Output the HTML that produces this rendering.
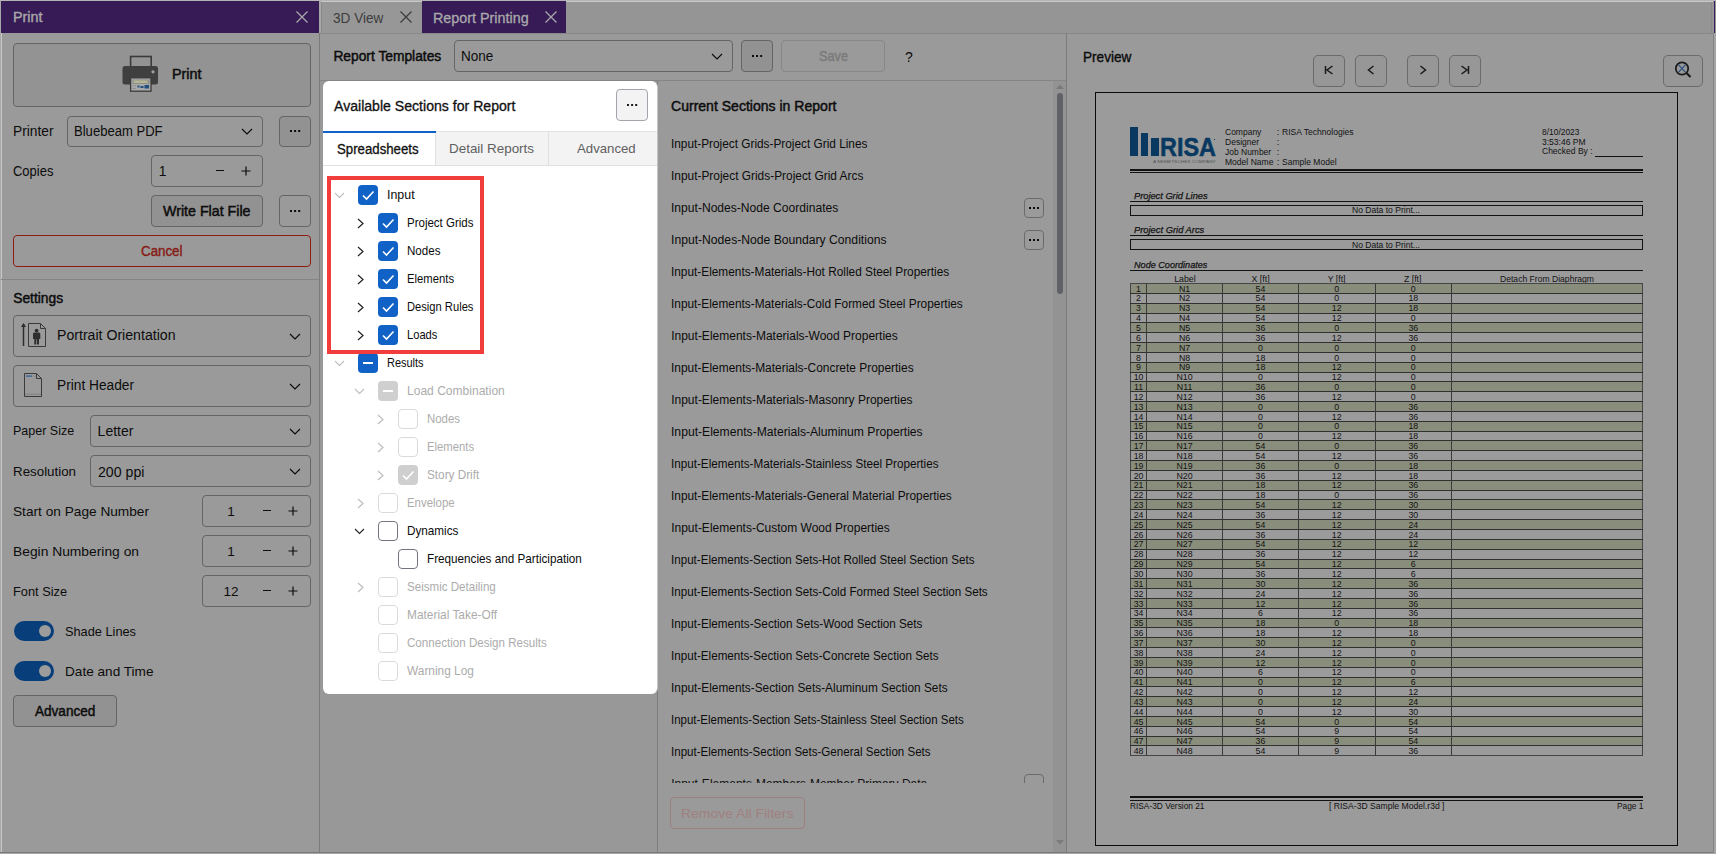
<!DOCTYPE html><html><head><meta charset="utf-8"><style>
html,body{margin:0;padding:0;}
body{width:1716px;height:854px;position:relative;overflow:hidden;font-family:"Liberation Sans",sans-serif;}
.t{position:absolute;white-space:nowrap;line-height:1;transform-origin:0 0;}
.r{position:absolute;}
</style></head><body>
<div class="r" style="left:0px;top:0px;width:1716px;height:854px;background:#9a9a9a"></div>
<div class="r" style="left:0px;top:0px;width:1716px;height:1px;background:#b4b4b4"></div>
<div class="r" style="left:0px;top:0px;width:1px;height:854px;background:#a8a8a8"></div>
<div class="r" style="left:1px;top:0px;width:1px;height:852px;background:#c8c8c8"></div>
<div class="r" style="left:1713px;top:33px;width:1px;height:820px;background:#858585"></div>
<div class="r" style="left:1714px;top:33px;width:2px;height:820px;background:#a4a4a4"></div>
<div class="r" style="left:0px;top:852px;width:1716px;height:1px;background:#787878"></div>
<div class="r" style="left:0px;top:853px;width:1716px;height:1px;background:#a8a8a8"></div>
<div class="r" style="left:1px;top:1px;width:318px;height:32px;background:#361b57"></div>
<div class="t" style="left:12.50px;top:10.45px;font-size:14px;color:#a9a9a9;-webkit-text-stroke:0.35px #a9a9a9;transform:scaleX(1.0248);">Print</div>
<svg class="r" style="left:296px;top:11px" width="12" height="12"><path d="M0.5 0.5 L11.5 11.5 M11.5 0.5 L0.5 11.5" stroke="#a9a9a9" stroke-width="1.3"/></svg>
<div class="r" style="left:319px;top:33px;width:1px;height:820px;background:#7a7a7a"></div>
<div class="r" style="left:13px;top:43px;width:298px;height:64px;background:#939393;border:1px solid #656565;border-radius:4px;box-sizing:border-box;"></div>
<svg class="r" style="left:120px;top:54px" width="42" height="40">
<rect x="10.6" y="2.5" width="20.6" height="11" fill="none" stroke="#3a3a3a" stroke-width="1.6"/>
<rect x="2.5" y="12" width="35.5" height="18.5" rx="2.5" fill="#3f3f3f"/>
<circle cx="33" cy="17.8" r="1.6" fill="#a0a0a0"/>
<rect x="10.6" y="23.8" width="20.4" height="13.4" fill="#a9a9a9" stroke="#3a3a3a" stroke-width="1.3"/>
<rect x="12.5" y="25.5" width="17" height="4.5" fill="#8f8f8a"/>
<rect x="13.6" y="26.4" width="14" height="2.6" fill="#b5b596"/>
<rect x="12" y="31.5" width="4" height="0.8" fill="#8a8a8a"/><rect x="12" y="34" width="4" height="0.8" fill="#8a8a8a"/>
<path d="M17.5 31.5 h2 v2 h-2z M20.5 32 h3 v2 h-3z M24.5 31 h4.5 v3.5 h-4.5z" fill="#1f4f7c"/>
</svg>
<div class="t" style="left:172.40px;top:67.52px;font-size:13.8px;color:#0c0c0c;-webkit-text-stroke:0.45px #0c0c0c;transform:scaleX(1.0396);">Print</div>
<div class="t" style="left:12.50px;top:124.35px;font-size:14px;color:#0c0c0c;transform:scaleX(0.9822);">Printer</div>
<div class="r" style="left:67px;top:116px;width:196px;height:31px;background:#9a9a9a;border:1px solid #656565;border-radius:4px;box-sizing:border-box;"></div>
<div class="t" style="left:74.30px;top:124.45px;font-size:14px;color:#0c0c0c;transform:scaleX(0.9333);">Bluebeam PDF</div>
<svg class="r" style="left:241.0px;top:127.5px" width="12" height="7"><path d="M1 1 L6.0 6 L11 1" fill="none" stroke="#0c0c0c" stroke-width="1.2"/></svg>
<div class="r" style="left:279px;top:116px;width:32px;height:31px;background:#929292;border:1px solid #656565;border-radius:4px;box-sizing:border-box;"></div>
<svg class="r" style="left:287.9px;top:128px" width="14.2" height="6"><rect x="2.0" y="2.0" width="2.0" height="2.0" fill="#0c0c0c"/><rect x="6.1" y="2.0" width="2.0" height="2.0" fill="#0c0c0c"/><rect x="10.2" y="2.0" width="2.0" height="2.0" fill="#0c0c0c"/></svg>
<div class="t" style="left:13.00px;top:163.85px;font-size:14px;color:#0c0c0c;transform:scaleX(0.9270);">Copies</div>
<div class="r" style="left:151px;top:155px;width:112px;height:32px;background:#9a9a9a;border:1px solid #656565;border-radius:4px;box-sizing:border-box;"></div>
<div class="t" style="left:158.80px;top:164.82px;font-size:13.8px;color:#0c0c0c;">1</div>
<div class="r" style="left:216px;top:170px;width:8px;height:1.2px;background:#0c0c0c"></div>
<svg class="r" style="left:241px;top:166px" width="10" height="10"><path d="M0.5 5 H9.5 M5 0.5 V9.5" stroke="#0c0c0c" stroke-width="1.2"/></svg>
<div class="r" style="left:151px;top:195px;width:112px;height:32px;background:#929292;border:1px solid #656565;border-radius:4px;box-sizing:border-box;"></div>
<div class="t" style="left:163.40px;top:204.82px;font-size:13.8px;color:#0c0c0c;-webkit-text-stroke:0.45px #0c0c0c;transform:scaleX(1.0312);">Write Flat File</div>
<div class="r" style="left:279px;top:195px;width:32px;height:32px;background:#9a9a9a;border:1px solid #656565;border-radius:4px;box-sizing:border-box;"></div>
<svg class="r" style="left:287.9px;top:208px" width="14.2" height="6"><rect x="2.0" y="2.0" width="2.0" height="2.0" fill="#0c0c0c"/><rect x="6.1" y="2.0" width="2.0" height="2.0" fill="#0c0c0c"/><rect x="10.2" y="2.0" width="2.0" height="2.0" fill="#0c0c0c"/></svg>
<div class="r" style="left:13px;top:235px;width:298px;height:32px;background:#9a9a9a;border:1px solid #8c1d12;border-radius:4px;box-sizing:border-box;"></div>
<div class="t" style="left:141.15px;top:244.45px;font-size:14px;color:#861a14;-webkit-text-stroke:0.4px #861a14;transform:scaleX(0.9523);">Cancel</div>
<div class="r" style="left:1px;top:279px;width:318px;height:1px;background:#858585"></div>
<div class="t" style="left:13.20px;top:291.52px;font-size:13.8px;color:#0c0c0c;-webkit-text-stroke:0.45px #0c0c0c;">Settings</div>
<div class="r" style="left:13px;top:315px;width:298px;height:42px;background:#9a9a9a;border:1px solid #656565;border-radius:4px;box-sizing:border-box;"></div>
<svg class="r" style="left:20px;top:320px" width="30" height="30">
<path d="M3.5 4 V26" stroke="#2d2d2d" stroke-width="1.5"/><path d="M1 7 L3.5 3 L6 7 Z" fill="#2d2d2d"/>
<path d="M8.5 3.5 H20.5 L25.5 8.5 V26.5 H8.5 Z" fill="none" stroke="#3a3a3a" stroke-width="1"/>
<path d="M20.5 3.5 V8.5 H25.5" fill="none" stroke="#3a3a3a" stroke-width="1"/>
<circle cx="16.6" cy="10.6" r="1.9" fill="#2e2e2e"/>
<path d="M13 14 Q13 12.6 14.5 12.6 H18.8 Q20.3 12.6 20.3 14 V19 H19 V24.5 H17 V19.5 H16.3 V24.5 H14.3 V19 H13 Z" fill="#2e2e2e"/>
</svg>
<div class="t" style="left:56.60px;top:328.05px;font-size:14px;color:#0c0c0c;transform:scaleX(1.0085);">Portrait Orientation</div>
<svg class="r" style="left:289.0px;top:332.5px" width="12" height="7"><path d="M1 1 L6.0 6 L11 1" fill="none" stroke="#0c0c0c" stroke-width="1.2"/></svg>
<div class="r" style="left:13px;top:365px;width:298px;height:42px;background:#9a9a9a;border:1px solid #656565;border-radius:4px;box-sizing:border-box;"></div>
<svg class="r" style="left:22px;top:371px" width="24" height="28">
<path d="M2.5 2.5 H14.5 L19.5 7.5 V25.5 H2.5 Z" fill="none" stroke="#3a3a3a" stroke-width="1"/>
<path d="M14.5 2.5 V7.5 H19.5" fill="none" stroke="#3a3a3a" stroke-width="1"/>
<rect x="4" y="4.5" width="6" height="1.2" fill="#2a5a9a"/><rect x="10.5" y="4.5" width="3.5" height="1.2" fill="#8a8a8a"/>
<rect x="3" y="22.8" width="16" height="0.8" fill="#7a7a7a"/>
</svg>
<div class="t" style="left:56.60px;top:378.15px;font-size:14px;color:#0c0c0c;transform:scaleX(0.9797);">Print Header</div>
<svg class="r" style="left:289.0px;top:382.5px" width="12" height="7"><path d="M1 1 L6.0 6 L11 1" fill="none" stroke="#0c0c0c" stroke-width="1.2"/></svg>
<div class="t" style="left:12.90px;top:424.40px;font-size:13px;color:#0c0c0c;transform:scaleX(0.9608);">Paper Size</div>
<div class="r" style="left:90px;top:415px;width:221px;height:32px;background:#9a9a9a;border:1px solid #656565;border-radius:4px;box-sizing:border-box;"></div>
<div class="t" style="left:97.60px;top:424.45px;font-size:14px;color:#0c0c0c;">Letter</div>
<svg class="r" style="left:289.0px;top:427.5px" width="12" height="7"><path d="M1 1 L6.0 6 L11 1" fill="none" stroke="#0c0c0c" stroke-width="1.2"/></svg>
<div class="t" style="left:12.90px;top:464.60px;font-size:13px;color:#0c0c0c;transform:scaleX(1.0256);">Resolution</div>
<div class="r" style="left:90px;top:455px;width:221px;height:32px;background:#9a9a9a;border:1px solid #656565;border-radius:4px;box-sizing:border-box;"></div>
<div class="t" style="left:97.80px;top:464.55px;font-size:14px;color:#0c0c0c;transform:scaleX(1.0102);">200 ppi</div>
<svg class="r" style="left:289.0px;top:467.5px" width="12" height="7"><path d="M1 1 L6.0 6 L11 1" fill="none" stroke="#0c0c0c" stroke-width="1.2"/></svg>
<div class="t" style="left:12.90px;top:504.77px;font-size:13.5px;color:#0c0c0c;transform:scaleX(1.0125);">Start on Page Number</div>
<div class="r" style="left:202px;top:495px;width:109px;height:32px;background:#9a9a9a;border:1px solid #656565;border-radius:4px;box-sizing:border-box;"></div>
<div class="t" style="left:227.25px;top:504.57px;font-size:13.5px;color:#0c0c0c;">1</div>
<div class="r" style="left:262.5px;top:510px;width:8.5px;height:1.2px;background:#0c0c0c"></div>
<svg class="r" style="left:288px;top:506px" width="10" height="10"><path d="M0.5 5 H9.5 M5 0.5 V9.5" stroke="#0c0c0c" stroke-width="1.2"/></svg>
<div class="t" style="left:12.90px;top:544.77px;font-size:13.5px;color:#0c0c0c;transform:scaleX(1.0238);">Begin Numbering on</div>
<div class="r" style="left:202px;top:535px;width:109px;height:32px;background:#9a9a9a;border:1px solid #656565;border-radius:4px;box-sizing:border-box;"></div>
<div class="t" style="left:227.25px;top:544.57px;font-size:13.5px;color:#0c0c0c;">1</div>
<div class="r" style="left:262.5px;top:550px;width:8.5px;height:1.2px;background:#0c0c0c"></div>
<svg class="r" style="left:288px;top:546px" width="10" height="10"><path d="M0.5 5 H9.5 M5 0.5 V9.5" stroke="#0c0c0c" stroke-width="1.2"/></svg>
<div class="t" style="left:12.90px;top:584.77px;font-size:13.5px;color:#0c0c0c;transform:scaleX(0.9469);">Font Size</div>
<div class="r" style="left:202px;top:575px;width:109px;height:32px;background:#9a9a9a;border:1px solid #656565;border-radius:4px;box-sizing:border-box;"></div>
<div class="t" style="left:223.49px;top:584.57px;font-size:13.5px;color:#0c0c0c;">12</div>
<div class="r" style="left:262.5px;top:590px;width:8.5px;height:1.2px;background:#0c0c0c"></div>
<svg class="r" style="left:288px;top:586px" width="10" height="10"><path d="M0.5 5 H9.5 M5 0.5 V9.5" stroke="#0c0c0c" stroke-width="1.2"/></svg>
<div class="r" style="left:14px;top:621px;width:40px;height:20px;background:#083f7a;border-radius:10px"></div>
<div class="r" style="left:39px;top:625px;width:12px;height:12px;background:#9c9c9c;border-radius:6px"></div>
<div class="t" style="left:65.00px;top:624.77px;font-size:13.5px;color:#0c0c0c;transform:scaleX(0.9459);">Shade Lines</div>
<div class="r" style="left:14px;top:661px;width:40px;height:20px;background:#083f7a;border-radius:10px"></div>
<div class="r" style="left:39px;top:665px;width:12px;height:12px;background:#9c9c9c;border-radius:6px"></div>
<div class="t" style="left:65.00px;top:664.77px;font-size:13.5px;color:#0c0c0c;transform:scaleX(1.0080);">Date and Time</div>
<div class="r" style="left:13px;top:695px;width:104px;height:32px;background:#929292;border:1px solid #656565;border-radius:4px;box-sizing:border-box;"></div>
<div class="t" style="left:35.30px;top:705.12px;font-size:13.8px;color:#0c0c0c;-webkit-text-stroke:0.45px #0c0c0c;transform:scaleX(0.9824);">Advanced</div>
<div class="r" style="left:320px;top:1px;width:1396px;height:32px;background:#959595"></div>
<div class="r" style="left:320px;top:1px;width:1393px;height:1px;background:#c8c8c8"></div>
<div class="r" style="left:319px;top:1px;width:2px;height:32px;background:#a6a6a6"></div>
<div class="r" style="left:321px;top:2px;width:101px;height:31px;background:#979797;border-left:1px solid #8a8a8a;box-sizing:border-box"></div>
<div class="r" style="left:1711px;top:2px;width:1px;height:31px;background:#8a8a8a"></div>
<div class="r" style="left:1714px;top:1px;width:1px;height:32px;background:#3a1e63"></div>
<div class="t" style="left:333.40px;top:11.15px;font-size:14px;color:#3d3d3d;transform:scaleX(0.9715);">3D View</div>
<svg class="r" style="left:400px;top:11px" width="12" height="12"><path d="M0.5 0.5 L11.5 11.5 M11.5 0.5 L0.5 11.5" stroke="#3d3d3d" stroke-width="1.3"/></svg>
<div class="r" style="left:422px;top:1px;width:144px;height:32px;background:#361b57"></div>
<div class="t" style="left:433.40px;top:11.15px;font-size:14px;color:#a9a9a9;-webkit-text-stroke:0.3px #a9a9a9;transform:scaleX(1.0238);">Report Printing</div>
<svg class="r" style="left:545px;top:11px" width="12" height="12"><path d="M0.5 0.5 L11.5 11.5 M11.5 0.5 L0.5 11.5" stroke="#a9a9a9" stroke-width="1.3"/></svg>
<div class="r" style="left:320px;top:33px;width:1393px;height:1px;background:#888888"></div>
<div class="t" style="left:333.40px;top:50.22px;font-size:13.8px;color:#0c0c0c;-webkit-text-stroke:0.45px #0c0c0c;">Report Templates</div>
<div class="r" style="left:454px;top:40px;width:279px;height:32px;background:#9a9a9a;border:1px solid #656565;border-radius:4px;box-sizing:border-box;"></div>
<div class="t" style="left:461.40px;top:49.35px;font-size:14px;color:#0c0c0c;transform:scaleX(0.9651);">None</div>
<svg class="r" style="left:711.0px;top:52.5px" width="12" height="7"><path d="M1 1 L6.0 6 L11 1" fill="none" stroke="#0c0c0c" stroke-width="1.2"/></svg>
<div class="r" style="left:741px;top:40px;width:32px;height:32px;background:#929292;border:1px solid #656565;border-radius:4px;box-sizing:border-box;"></div>
<svg class="r" style="left:749.9px;top:53px" width="14.2" height="6"><rect x="2.0" y="2.0" width="2.0" height="2.0" fill="#0c0c0c"/><rect x="6.1" y="2.0" width="2.0" height="2.0" fill="#0c0c0c"/><rect x="10.2" y="2.0" width="2.0" height="2.0" fill="#0c0c0c"/></svg>
<div class="r" style="left:781px;top:40px;width:104px;height:32px;background:#9a9a9a;border:1px solid #878787;border-radius:4px;box-sizing:border-box;"></div>
<div class="t" style="left:819.00px;top:49.82px;font-size:13.8px;color:#7a7a7a;-webkit-text-stroke:0.45px #7a7a7a;transform:scaleX(0.9220);">Save</div>
<div class="t" style="left:905.11px;top:50.15px;font-size:14px;color:#0c0c0c;">?</div>
<div class="r" style="left:320px;top:80px;width:747px;height:1px;background:#858585"></div>
<div class="r" style="left:1066px;top:33px;width:1px;height:819px;background:#7b7b7b"></div>
<div class="r" style="left:320px;top:81px;width:337px;height:771px;background:#989898"></div>
<div class="r" style="left:657px;top:81px;width:1px;height:771px;background:#7d7d7d"></div>
<div class="r" style="left:323px;top:81px;width:334px;height:613px;background:#ffffff;border-radius:6px;box-shadow:1px 0 0 #c4c4c4"></div>
<div class="t" style="left:333.50px;top:100.12px;font-size:13.8px;color:#111;-webkit-text-stroke:0.3px #111;transform:scaleX(1.0213);">Available Sections for Report</div>
<div class="r" style="left:616px;top:89px;width:32px;height:32px;background:#f3f3f3;border:1px solid #a4a4ac;border-radius:4px;box-sizing:border-box;"></div>
<svg class="r" style="left:624.9px;top:102px" width="14.2" height="6"><rect x="2.0" y="2.0" width="2.0" height="2.0" fill="#1a1a1a"/><rect x="6.1" y="2.0" width="2.0" height="2.0" fill="#1a1a1a"/><rect x="10.2" y="2.0" width="2.0" height="2.0" fill="#1a1a1a"/></svg>
<div class="r" style="left:323px;top:131px;width:334px;height:1px;background:#e3e3e3"></div>
<div class="r" style="left:436px;top:132px;width:221px;height:33px;background:#f3f3f3"></div>
<div class="r" style="left:435px;top:132px;width:1px;height:33px;background:#e0e0e0"></div>
<div class="r" style="left:548px;top:132px;width:1px;height:33px;background:#e0e0e0"></div>
<div class="r" style="left:323px;top:131px;width:113px;height:2px;background:#0f62c8"></div>
<div class="r" style="left:323px;top:165px;width:334px;height:1px;background:#e0e0e0"></div>
<div class="t" style="left:337.30px;top:142.52px;font-size:13.8px;color:#111;-webkit-text-stroke:0.3px #111;transform:scaleX(0.9582);">Spreadsheets</div>
<div class="t" style="left:448.60px;top:142.47px;font-size:13.5px;color:#606060;transform:scaleX(0.9937);">Detail Reports</div>
<div class="t" style="left:576.60px;top:142.47px;font-size:13.5px;color:#606060;transform:scaleX(0.9776);">Advanced</div>
<svg class="r" style="left:358px;top:185px" width="20" height="20"><rect x="0" y="0" width="20" height="20" rx="4" fill="#1062c6"/><path d="M5 10.5 L8.5 14 L15.5 6.5" fill="none" stroke="#fff" stroke-width="1.6"/></svg>
<div class="t" style="left:386.70px;top:189.17px;font-size:12.2px;color:#0c0c0c;transform:scaleX(1.0172);">Input</div>
<svg class="r" style="left:334.0px;top:192.05px" width="11" height="6.5"><path d="M1 1 L5.5 5.5 L10 1" fill="none" stroke="#bdbdbd" stroke-width="1.1"/></svg>
<svg class="r" style="left:378px;top:213px" width="20" height="20"><rect x="0" y="0" width="20" height="20" rx="4" fill="#1062c6"/><path d="M5 10.5 L8.5 14 L15.5 6.5" fill="none" stroke="#fff" stroke-width="1.6"/></svg>
<div class="t" style="left:406.70px;top:217.17px;font-size:12.2px;color:#0c0c0c;transform:scaleX(0.9432);">Project Grids</div>
<svg class="r" style="left:356.5px;top:217.5px" width="7" height="11"><path d="M1 1 L6 5.5 L1 10" fill="none" stroke="#222" stroke-width="1.2"/></svg>
<svg class="r" style="left:378px;top:241px" width="20" height="20"><rect x="0" y="0" width="20" height="20" rx="4" fill="#1062c6"/><path d="M5 10.5 L8.5 14 L15.5 6.5" fill="none" stroke="#fff" stroke-width="1.6"/></svg>
<div class="t" style="left:406.70px;top:245.17px;font-size:12.2px;color:#0c0c0c;transform:scaleX(0.9499);">Nodes</div>
<svg class="r" style="left:356.5px;top:245.5px" width="7" height="11"><path d="M1 1 L6 5.5 L1 10" fill="none" stroke="#222" stroke-width="1.2"/></svg>
<svg class="r" style="left:378px;top:269px" width="20" height="20"><rect x="0" y="0" width="20" height="20" rx="4" fill="#1062c6"/><path d="M5 10.5 L8.5 14 L15.5 6.5" fill="none" stroke="#fff" stroke-width="1.6"/></svg>
<div class="t" style="left:406.70px;top:273.17px;font-size:12.2px;color:#0c0c0c;transform:scaleX(0.9262);">Elements</div>
<svg class="r" style="left:356.5px;top:273.5px" width="7" height="11"><path d="M1 1 L6 5.5 L1 10" fill="none" stroke="#222" stroke-width="1.2"/></svg>
<svg class="r" style="left:378px;top:297px" width="20" height="20"><rect x="0" y="0" width="20" height="20" rx="4" fill="#1062c6"/><path d="M5 10.5 L8.5 14 L15.5 6.5" fill="none" stroke="#fff" stroke-width="1.6"/></svg>
<div class="t" style="left:406.70px;top:301.17px;font-size:12.2px;color:#0c0c0c;transform:scaleX(0.9165);">Design Rules</div>
<svg class="r" style="left:356.5px;top:301.5px" width="7" height="11"><path d="M1 1 L6 5.5 L1 10" fill="none" stroke="#222" stroke-width="1.2"/></svg>
<svg class="r" style="left:378px;top:325px" width="20" height="20"><rect x="0" y="0" width="20" height="20" rx="4" fill="#1062c6"/><path d="M5 10.5 L8.5 14 L15.5 6.5" fill="none" stroke="#fff" stroke-width="1.6"/></svg>
<div class="t" style="left:406.70px;top:329.17px;font-size:12.2px;color:#0c0c0c;transform:scaleX(0.9145);">Loads</div>
<svg class="r" style="left:356.5px;top:329.5px" width="7" height="11"><path d="M1 1 L6 5.5 L1 10" fill="none" stroke="#222" stroke-width="1.2"/></svg>
<svg class="r" style="left:358px;top:353px" width="20" height="20"><rect x="0" y="0" width="20" height="20" rx="4" fill="#1062c6"/><rect x="5" y="9" width="10" height="2" fill="#fff"/></svg>
<div class="t" style="left:386.70px;top:357.17px;font-size:12.2px;color:#0c0c0c;transform:scaleX(0.8997);">Results</div>
<svg class="r" style="left:334.0px;top:360.05px" width="11" height="6.5"><path d="M1 1 L5.5 5.5 L10 1" fill="none" stroke="#bdbdbd" stroke-width="1.1"/></svg>
<svg class="r" style="left:378px;top:381px" width="20" height="20"><rect x="0" y="0" width="20" height="20" rx="4" fill="#cfcfcf"/><rect x="5" y="9" width="10" height="2" fill="#fff"/></svg>
<div class="t" style="left:406.70px;top:385.17px;font-size:12.2px;color:#acacac;transform:scaleX(0.9886);">Load Combination</div>
<svg class="r" style="left:354.0px;top:388.05px" width="11" height="6.5"><path d="M1 1 L5.5 5.5 L10 1" fill="none" stroke="#bdbdbd" stroke-width="1.1"/></svg>
<svg class="r" style="left:398px;top:409px" width="20" height="20"><rect x="0.5" y="0.5" width="19" height="19" rx="3.5" fill="#fff" stroke="#dadada" stroke-width="1"/></svg>
<div class="t" style="left:426.70px;top:413.17px;font-size:12.2px;color:#acacac;transform:scaleX(0.9358);">Nodes</div>
<svg class="r" style="left:376.5px;top:413.5px" width="7" height="11"><path d="M1 1 L6 5.5 L1 10" fill="none" stroke="#bdbdbd" stroke-width="1.2"/></svg>
<svg class="r" style="left:398px;top:437px" width="20" height="20"><rect x="0.5" y="0.5" width="19" height="19" rx="3.5" fill="#fff" stroke="#dadada" stroke-width="1"/></svg>
<div class="t" style="left:426.70px;top:441.17px;font-size:12.2px;color:#acacac;transform:scaleX(0.9262);">Elements</div>
<svg class="r" style="left:376.5px;top:441.5px" width="7" height="11"><path d="M1 1 L6 5.5 L1 10" fill="none" stroke="#bdbdbd" stroke-width="1.2"/></svg>
<svg class="r" style="left:398px;top:465px" width="20" height="20"><rect x="0" y="0" width="20" height="20" rx="4" fill="#cfcfcf"/><path d="M5 10.5 L8.5 14 L15.5 6.5" fill="none" stroke="#fff" stroke-width="1.6"/></svg>
<div class="t" style="left:426.70px;top:469.17px;font-size:12.2px;color:#acacac;transform:scaleX(0.9645);">Story Drift</div>
<svg class="r" style="left:376.5px;top:469.5px" width="7" height="11"><path d="M1 1 L6 5.5 L1 10" fill="none" stroke="#bdbdbd" stroke-width="1.2"/></svg>
<svg class="r" style="left:378px;top:493px" width="20" height="20"><rect x="0.5" y="0.5" width="19" height="19" rx="3.5" fill="#fff" stroke="#dadada" stroke-width="1"/></svg>
<div class="t" style="left:406.70px;top:497.17px;font-size:12.2px;color:#acacac;transform:scaleX(0.9376);">Envelope</div>
<svg class="r" style="left:356.5px;top:497.5px" width="7" height="11"><path d="M1 1 L6 5.5 L1 10" fill="none" stroke="#bdbdbd" stroke-width="1.2"/></svg>
<svg class="r" style="left:378px;top:521px" width="20" height="20"><rect x="0.5" y="0.5" width="19" height="19" rx="3.5" fill="#fff" stroke="#74747e" stroke-width="1"/></svg>
<div class="t" style="left:406.70px;top:525.17px;font-size:12.2px;color:#0c0c0c;transform:scaleX(0.9616);">Dynamics</div>
<svg class="r" style="left:354.0px;top:528.05px" width="11" height="6.5"><path d="M1 1 L5.5 5.5 L10 1" fill="none" stroke="#222" stroke-width="1.1"/></svg>
<svg class="r" style="left:398px;top:549px" width="20" height="20"><rect x="0.5" y="0.5" width="19" height="19" rx="3.5" fill="#fff" stroke="#74747e" stroke-width="1"/></svg>
<div class="t" style="left:426.70px;top:553.17px;font-size:12.2px;color:#0c0c0c;transform:scaleX(0.9603);">Frequencies and Participation</div>
<svg class="r" style="left:378px;top:577px" width="20" height="20"><rect x="0.5" y="0.5" width="19" height="19" rx="3.5" fill="#fff" stroke="#dadada" stroke-width="1"/></svg>
<div class="t" style="left:406.70px;top:581.17px;font-size:12.2px;color:#acacac;transform:scaleX(0.9501);">Seismic Detailing</div>
<svg class="r" style="left:356.5px;top:581.5px" width="7" height="11"><path d="M1 1 L6 5.5 L1 10" fill="none" stroke="#bdbdbd" stroke-width="1.2"/></svg>
<svg class="r" style="left:378px;top:605px" width="20" height="20"><rect x="0.5" y="0.5" width="19" height="19" rx="3.5" fill="#fff" stroke="#dadada" stroke-width="1"/></svg>
<div class="t" style="left:406.70px;top:609.17px;font-size:12.2px;color:#acacac;transform:scaleX(0.9758);">Material Take-Off</div>
<svg class="r" style="left:378px;top:633px" width="20" height="20"><rect x="0.5" y="0.5" width="19" height="19" rx="3.5" fill="#fff" stroke="#dadada" stroke-width="1"/></svg>
<div class="t" style="left:406.70px;top:637.17px;font-size:12.2px;color:#acacac;transform:scaleX(0.9514);">Connection Design Results</div>
<svg class="r" style="left:378px;top:661px" width="20" height="20"><rect x="0.5" y="0.5" width="19" height="19" rx="3.5" fill="#fff" stroke="#dadada" stroke-width="1"/></svg>
<div class="t" style="left:406.70px;top:665.17px;font-size:12.2px;color:#acacac;transform:scaleX(0.9750);">Warning Log</div>
<div class="r" style="left:327px;top:176px;width:157px;height:178px;border:4px solid #f23d3d;box-sizing:border-box"></div>
<div class="t" style="left:670.50px;top:99.92px;font-size:13.8px;color:#0c0c0c;-webkit-text-stroke:0.45px #0c0c0c;transform:scaleX(1.0178);">Current Sections in Report</div>
<div class="t" style="left:671.20px;top:138.24px;font-size:12px;color:#0c0c0c;transform:scaleX(0.9849);">Input-Project Grids-Project Grid Lines</div>
<div class="t" style="left:671.20px;top:170.24px;font-size:12px;color:#0c0c0c;transform:scaleX(0.9915);">Input-Project Grids-Project Grid Arcs</div>
<div class="t" style="left:671.20px;top:202.24px;font-size:12px;color:#0c0c0c;transform:scaleX(1.0072);">Input-Nodes-Node Coordinates</div>
<div class="t" style="left:671.20px;top:234.24px;font-size:12px;color:#0c0c0c;transform:scaleX(1.0127);">Input-Nodes-Node Boundary Conditions</div>
<div class="t" style="left:671.20px;top:266.24px;font-size:12px;color:#0c0c0c;transform:scaleX(0.9861);">Input-Elements-Materials-Hot Rolled Steel Properties</div>
<div class="t" style="left:671.20px;top:298.24px;font-size:12px;color:#0c0c0c;transform:scaleX(0.9876);">Input-Elements-Materials-Cold Formed Steel Properties</div>
<div class="t" style="left:671.20px;top:330.24px;font-size:12px;color:#0c0c0c;">Input-Elements-Materials-Wood Properties</div>
<div class="t" style="left:671.20px;top:362.24px;font-size:12px;color:#0c0c0c;transform:scaleX(0.9939);">Input-Elements-Materials-Concrete Properties</div>
<div class="t" style="left:671.20px;top:394.24px;font-size:12px;color:#0c0c0c;">Input-Elements-Materials-Masonry Properties</div>
<div class="t" style="left:671.20px;top:426.24px;font-size:12px;color:#0c0c0c;transform:scaleX(1.0118);">Input-Elements-Materials-Aluminum Properties</div>
<div class="t" style="left:671.20px;top:458.24px;font-size:12px;color:#0c0c0c;transform:scaleX(0.9735);">Input-Elements-Materials-Stainless Steel Properties</div>
<div class="t" style="left:671.20px;top:490.24px;font-size:12px;color:#0c0c0c;transform:scaleX(0.9880);">Input-Elements-Materials-General Material Properties</div>
<div class="t" style="left:671.20px;top:522.24px;font-size:12px;color:#0c0c0c;">Input-Elements-Custom Wood Properties</div>
<div class="t" style="left:671.20px;top:554.24px;font-size:12px;color:#0c0c0c;transform:scaleX(0.9681);">Input-Elements-Section Sets-Hot Rolled Steel Section Sets</div>
<div class="t" style="left:671.20px;top:586.24px;font-size:12px;color:#0c0c0c;transform:scaleX(0.9690);">Input-Elements-Section Sets-Cold Formed Steel Section Sets</div>
<div class="t" style="left:671.20px;top:618.24px;font-size:12px;color:#0c0c0c;transform:scaleX(0.9748);">Input-Elements-Section Sets-Wood Section Sets</div>
<div class="t" style="left:671.20px;top:650.24px;font-size:12px;color:#0c0c0c;transform:scaleX(0.9711);">Input-Elements-Section Sets-Concrete Section Sets</div>
<div class="t" style="left:671.20px;top:682.24px;font-size:12px;color:#0c0c0c;transform:scaleX(0.9874);">Input-Elements-Section Sets-Aluminum Section Sets</div>
<div class="t" style="left:671.20px;top:714.24px;font-size:12px;color:#0c0c0c;transform:scaleX(0.9561);">Input-Elements-Section Sets-Stainless Steel Section Sets</div>
<div class="t" style="left:671.20px;top:746.24px;font-size:12px;color:#0c0c0c;transform:scaleX(0.9634);">Input-Elements-Section Sets-General Section Sets</div>
<div class="r" style="left:1024px;top:198px;width:20px;height:20px;background:#9a9a9a;border:1px solid #6a6a6a;border-radius:4px;box-sizing:border-box;"></div>
<svg class="r" style="left:1027px;top:205px" width="14" height="6"><rect x="2" y="2" width="2" height="2" fill="#0c0c0c"/><rect x="6" y="2" width="2" height="2" fill="#0c0c0c"/><rect x="10" y="2" width="2" height="2" fill="#0c0c0c"/></svg>
<div class="r" style="left:1024px;top:230px;width:20px;height:20px;background:#9a9a9a;border:1px solid #6a6a6a;border-radius:4px;box-sizing:border-box;"></div>
<svg class="r" style="left:1027px;top:237px" width="14" height="6"><rect x="2" y="2" width="2" height="2" fill="#0c0c0c"/><rect x="6" y="2" width="2" height="2" fill="#0c0c0c"/><rect x="10" y="2" width="2" height="2" fill="#0c0c0c"/></svg>
<div class="r" style="left:660px;top:770px;width:390px;height:12.5px;overflow:hidden">
<div class="t" style="left:11.20px;top:8.24px;font-size:12px;color:#111;">Input-Elements-Members-Member Primary Data</div>
<div class="r" style="left:364px;top:4px;width:20px;height:20px;background:#9a9a9a;border:1px solid #6a6a6a;border-radius:4px;box-sizing:border-box"></div>
</div>
<div class="r" style="left:670px;top:797px;width:135px;height:32px;background:#9a9a9a;border:1px solid #9c8080;border-radius:4px;box-sizing:border-box;"></div>
<div class="t" style="left:681.00px;top:807.07px;font-size:13.5px;color:#a08080;transform:scaleX(1.0342);">Remove All Filters</div>
<div class="r" style="left:1053px;top:81px;width:13px;height:771px;background:#939393"></div>
<svg class="r" style="left:1055px;top:83px" width="10" height="7"><path d="M1 6 L5 1.5 L9 6 Z" fill="#7a7a7a"/></svg>
<svg class="r" style="left:1055px;top:839px" width="10" height="7"><path d="M1 1 L5 5.5 L9 1 Z" fill="#7a7a7a"/></svg>
<div class="r" style="left:1057px;top:93px;width:6px;height:200.5px;background:#606167;border-radius:3px"></div>
<div class="t" style="left:1082.90px;top:51.32px;font-size:13.8px;color:#0c0c0c;-webkit-text-stroke:0.35px #0c0c0c;transform:scaleX(0.9861);">Preview</div>
<div class="r" style="left:1313px;top:55px;width:32px;height:32px;background:#979797;border:1px solid #6a6a6a;border-radius:5px;box-sizing:border-box;"></div>
<svg class="r" style="left:0;top:0" width="1716" height="100"><path d="M1325.5 66 V74 M1332.5 66 L1327 70 L1332.5 74" fill="none" stroke="#1a1a1a" stroke-width="1.5"/></svg>
<div class="r" style="left:1355px;top:55px;width:32px;height:32px;background:#979797;border:1px solid #6a6a6a;border-radius:5px;box-sizing:border-box;"></div>
<svg class="r" style="left:0;top:0" width="1716" height="100"><path d="M1373.5 66 L1368.5 70 L1373.5 74" fill="none" stroke="#1a1a1a" stroke-width="1.5"/></svg>
<div class="r" style="left:1407px;top:55px;width:32px;height:32px;background:#979797;border:1px solid #6a6a6a;border-radius:5px;box-sizing:border-box;"></div>
<svg class="r" style="left:0;top:0" width="1716" height="100"><path d="M1420.5 66 L1425.5 70 L1420.5 74" fill="none" stroke="#1a1a1a" stroke-width="1.5"/></svg>
<div class="r" style="left:1449px;top:55px;width:32px;height:32px;background:#979797;border:1px solid #6a6a6a;border-radius:5px;box-sizing:border-box;"></div>
<svg class="r" style="left:0;top:0" width="1716" height="100"><path d="M1468.5 66 V74 M1461.5 66 L1467 70 L1461.5 74" fill="none" stroke="#1a1a1a" stroke-width="1.5"/></svg>
<div class="r" style="left:1663px;top:55px;width:40px;height:32px;background:#979797;border:1px solid #6a6a6a;border-radius:5px;box-sizing:border-box;"></div>
<svg class="r" style="left:1670px;top:58px" width="26" height="26">
<circle cx="12" cy="10.5" r="6.2" fill="none" stroke="#1a1a1a" stroke-width="1.7"/>
<path d="M16.5 15 L20.5 19" stroke="#1a1a1a" stroke-width="2.2"/>
<path d="M8.6 6.9 L15.4 14.1 M15.4 6.9 L8.6 14.1" stroke="#244e80" stroke-width="1.1"/>
</svg>
<div class="r" style="left:1095px;top:92px;width:583px;height:754px;background:#9b9b9b;border:1.5px solid #0a0a0a;box-sizing:border-box"></div>
<div class="r" style="left:1130px;top:127px;width:8px;height:29px;background:#093960"></div>
<div class="r" style="left:1140.5px;top:133px;width:7.6px;height:23px;background:#093960"></div>
<div class="r" style="left:1151px;top:138px;width:7.8px;height:18px;background:#093960"></div>
<div class="t" style="left:1160.20px;top:134.74px;font-size:25px;color:#093960;font-weight:bold;transform:scaleX(0.9376);-webkit-text-stroke:0.5px #093960;">RISA</div>
<div class="r" style="left:1213.5px;top:138.5px;width:1.2px;height:1.2px;background:#093960"></div>
<div class="t" style="left:1152.80px;top:159.74px;font-size:4.2px;color:#555555;transform:scaleX(1.1455);">A NEMETSCHEK COMPANY</div>
<div class="t" style="left:1224.50px;top:128.21px;font-size:9.2px;color:#121212;transform:scaleX(0.9245);">Company</div>
<div class="t" style="left:1276.80px;top:128.21px;font-size:9.2px;color:#121212;">:</div>
<div class="t" style="left:1282.40px;top:128.21px;font-size:9.2px;color:#121212;transform:scaleX(0.9304);">RISA Technologies</div>
<div class="t" style="left:1224.50px;top:138.11px;font-size:9.2px;color:#121212;transform:scaleX(0.9262);">Designer</div>
<div class="t" style="left:1276.80px;top:138.11px;font-size:9.2px;color:#121212;">:</div>
<div class="t" style="left:1224.50px;top:147.91px;font-size:9.2px;color:#121212;transform:scaleX(0.9220);">Job Number</div>
<div class="t" style="left:1276.80px;top:147.91px;font-size:9.2px;color:#121212;">:</div>
<div class="t" style="left:1224.50px;top:157.71px;font-size:9.2px;color:#121212;transform:scaleX(0.9299);">Model Name</div>
<div class="t" style="left:1276.80px;top:157.71px;font-size:9.2px;color:#121212;">:</div>
<div class="t" style="left:1282.40px;top:157.71px;font-size:9.2px;color:#121212;transform:scaleX(0.9284);">Sample Model</div>
<div class="t" style="left:1542.30px;top:127.51px;font-size:9.2px;color:#121212;transform:scaleX(0.9162);">8/10/2023</div>
<div class="t" style="left:1542.30px;top:137.51px;font-size:9.2px;color:#121212;transform:scaleX(0.9266);">3:53:46 PM</div>
<div class="t" style="left:1542.30px;top:147.41px;font-size:9.2px;color:#121212;transform:scaleX(0.9248);">Checked By :</div>
<div class="r" style="left:1595px;top:156px;width:48px;height:1px;background:#121212"></div>
<div class="r" style="left:1130px;top:168.5px;width:513px;height:2px;background:#121212"></div>
<div class="r" style="left:1130px;top:171.8px;width:513px;height:1.2px;background:#121212"></div>
<div class="t" style="left:1134.00px;top:190.56px;font-size:9.5px;color:#121212;font-style:italic;transform:scaleX(0.9748);-webkit-text-stroke:0.25px #121212;">Project Grid Lines</div>
<div class="r" style="left:1130px;top:200.6px;width:513px;height:1.3px;background:#121212"></div>
<div class="r" style="left:1130px;top:205px;width:513px;height:10.5px;border:1px solid #121212;box-sizing:border-box"></div>
<div class="t" style="left:1352.00px;top:206.32px;font-size:8.6px;color:#121212;transform:scaleX(0.9949);">No Data to Print...</div>
<div class="t" style="left:1134.00px;top:224.56px;font-size:9.5px;color:#121212;font-style:italic;transform:scaleX(0.9840);-webkit-text-stroke:0.25px #121212;">Project Grid Arcs</div>
<div class="r" style="left:1130px;top:234.6px;width:513px;height:1.3px;background:#121212"></div>
<div class="r" style="left:1130px;top:239.2px;width:513px;height:10.5px;border:1px solid #121212;box-sizing:border-box"></div>
<div class="t" style="left:1352.00px;top:240.52px;font-size:8.6px;color:#121212;transform:scaleX(0.9949);">No Data to Print...</div>
<div class="t" style="left:1134.00px;top:259.56px;font-size:9.5px;color:#121212;font-style:italic;transform:scaleX(0.9585);-webkit-text-stroke:0.25px #121212;">Node Coordinates</div>
<div class="r" style="left:1130px;top:269.6px;width:513px;height:1.3px;background:#121212"></div>
<div class="t" style="left:1174.13px;top:274.75px;font-size:8.8px;color:#121212;">Label</div>
<div class="t" style="left:1251.55px;top:274.75px;font-size:8.8px;color:#121212;">X [ft]</div>
<div class="t" style="left:1327.63px;top:274.75px;font-size:8.8px;color:#121212;">Y [ft]</div>
<div class="t" style="left:1403.90px;top:274.75px;font-size:8.8px;color:#121212;">Z [ft]</div>
<div class="t" style="left:1500.00px;top:274.75px;font-size:8.8px;color:#121212;transform:scaleX(0.9757);">Detach From Diaphragm</div>
<div class="r" style="left:1130px;top:283px;width:513px;height:473px;border:1px solid #464646;box-sizing:border-box"></div>
<div class="r" style="left:1131px;top:284px;width:511px;height:9px;background:#898d7b"></div>
<div class="t" style="left:1136.10px;top:284.65px;font-size:8.8px;color:#121212;">1</div>
<div class="t" style="left:1178.93px;top:284.65px;font-size:8.8px;color:#121212;">N1</div>
<div class="t" style="left:1255.51px;top:284.65px;font-size:8.8px;color:#121212;">54</div>
<div class="t" style="left:1334.30px;top:284.65px;font-size:8.8px;color:#121212;">0</div>
<div class="t" style="left:1410.85px;top:284.65px;font-size:8.8px;color:#121212;">0</div>
<div class="r" style="left:1130px;top:293px;width:513px;height:1px;background:#303030"></div>
<div class="t" style="left:1136.10px;top:294.49px;font-size:8.8px;color:#121212;">2</div>
<div class="t" style="left:1178.93px;top:294.49px;font-size:8.8px;color:#121212;">N2</div>
<div class="t" style="left:1255.51px;top:294.49px;font-size:8.8px;color:#121212;">54</div>
<div class="t" style="left:1334.30px;top:294.49px;font-size:8.8px;color:#121212;">0</div>
<div class="t" style="left:1408.41px;top:294.49px;font-size:8.8px;color:#121212;">18</div>
<div class="r" style="left:1131px;top:304px;width:511px;height:9px;background:#898d7b"></div>
<div class="r" style="left:1130px;top:303px;width:513px;height:1px;background:#303030"></div>
<div class="t" style="left:1136.10px;top:304.33px;font-size:8.8px;color:#121212;">3</div>
<div class="t" style="left:1178.93px;top:304.33px;font-size:8.8px;color:#121212;">N3</div>
<div class="t" style="left:1255.51px;top:304.33px;font-size:8.8px;color:#121212;">54</div>
<div class="t" style="left:1331.86px;top:304.33px;font-size:8.8px;color:#121212;">12</div>
<div class="t" style="left:1408.41px;top:304.33px;font-size:8.8px;color:#121212;">18</div>
<div class="r" style="left:1130px;top:313px;width:513px;height:1px;background:#303030"></div>
<div class="t" style="left:1136.10px;top:314.17px;font-size:8.8px;color:#121212;">4</div>
<div class="t" style="left:1178.93px;top:314.17px;font-size:8.8px;color:#121212;">N4</div>
<div class="t" style="left:1255.51px;top:314.17px;font-size:8.8px;color:#121212;">54</div>
<div class="t" style="left:1331.86px;top:314.17px;font-size:8.8px;color:#121212;">12</div>
<div class="t" style="left:1410.85px;top:314.17px;font-size:8.8px;color:#121212;">0</div>
<div class="r" style="left:1131px;top:323px;width:511px;height:9px;background:#898d7b"></div>
<div class="r" style="left:1130px;top:322px;width:513px;height:1px;background:#303030"></div>
<div class="t" style="left:1136.10px;top:324.01px;font-size:8.8px;color:#121212;">5</div>
<div class="t" style="left:1178.93px;top:324.01px;font-size:8.8px;color:#121212;">N5</div>
<div class="t" style="left:1255.51px;top:324.01px;font-size:8.8px;color:#121212;">36</div>
<div class="t" style="left:1334.30px;top:324.01px;font-size:8.8px;color:#121212;">0</div>
<div class="t" style="left:1408.41px;top:324.01px;font-size:8.8px;color:#121212;">36</div>
<div class="r" style="left:1130px;top:332px;width:513px;height:1px;background:#303030"></div>
<div class="t" style="left:1136.10px;top:333.85px;font-size:8.8px;color:#121212;">6</div>
<div class="t" style="left:1178.93px;top:333.85px;font-size:8.8px;color:#121212;">N6</div>
<div class="t" style="left:1255.51px;top:333.85px;font-size:8.8px;color:#121212;">36</div>
<div class="t" style="left:1331.86px;top:333.85px;font-size:8.8px;color:#121212;">12</div>
<div class="t" style="left:1408.41px;top:333.85px;font-size:8.8px;color:#121212;">36</div>
<div class="r" style="left:1131px;top:343px;width:511px;height:9px;background:#898d7b"></div>
<div class="r" style="left:1130px;top:342px;width:513px;height:1px;background:#303030"></div>
<div class="t" style="left:1136.10px;top:343.69px;font-size:8.8px;color:#121212;">7</div>
<div class="t" style="left:1178.93px;top:343.69px;font-size:8.8px;color:#121212;">N7</div>
<div class="t" style="left:1257.95px;top:343.69px;font-size:8.8px;color:#121212;">0</div>
<div class="t" style="left:1334.30px;top:343.69px;font-size:8.8px;color:#121212;">0</div>
<div class="t" style="left:1410.85px;top:343.69px;font-size:8.8px;color:#121212;">0</div>
<div class="r" style="left:1130px;top:352px;width:513px;height:1px;background:#303030"></div>
<div class="t" style="left:1136.10px;top:353.53px;font-size:8.8px;color:#121212;">8</div>
<div class="t" style="left:1178.93px;top:353.53px;font-size:8.8px;color:#121212;">N8</div>
<div class="t" style="left:1255.51px;top:353.53px;font-size:8.8px;color:#121212;">18</div>
<div class="t" style="left:1334.30px;top:353.53px;font-size:8.8px;color:#121212;">0</div>
<div class="t" style="left:1410.85px;top:353.53px;font-size:8.8px;color:#121212;">0</div>
<div class="r" style="left:1131px;top:363px;width:511px;height:9px;background:#898d7b"></div>
<div class="r" style="left:1130px;top:362px;width:513px;height:1px;background:#303030"></div>
<div class="t" style="left:1136.10px;top:363.37px;font-size:8.8px;color:#121212;">9</div>
<div class="t" style="left:1178.93px;top:363.37px;font-size:8.8px;color:#121212;">N9</div>
<div class="t" style="left:1255.51px;top:363.37px;font-size:8.8px;color:#121212;">18</div>
<div class="t" style="left:1331.86px;top:363.37px;font-size:8.8px;color:#121212;">12</div>
<div class="t" style="left:1410.85px;top:363.37px;font-size:8.8px;color:#121212;">0</div>
<div class="r" style="left:1130px;top:372px;width:513px;height:1px;background:#303030"></div>
<div class="t" style="left:1133.66px;top:373.21px;font-size:8.8px;color:#121212;">10</div>
<div class="t" style="left:1176.48px;top:373.21px;font-size:8.8px;color:#121212;">N10</div>
<div class="t" style="left:1257.95px;top:373.21px;font-size:8.8px;color:#121212;">0</div>
<div class="t" style="left:1331.86px;top:373.21px;font-size:8.8px;color:#121212;">12</div>
<div class="t" style="left:1410.85px;top:373.21px;font-size:8.8px;color:#121212;">0</div>
<div class="r" style="left:1131px;top:382px;width:511px;height:9px;background:#898d7b"></div>
<div class="r" style="left:1130px;top:381px;width:513px;height:1px;background:#303030"></div>
<div class="t" style="left:1133.98px;top:383.05px;font-size:8.8px;color:#121212;">11</div>
<div class="t" style="left:1176.80px;top:383.05px;font-size:8.8px;color:#121212;">N11</div>
<div class="t" style="left:1255.51px;top:383.05px;font-size:8.8px;color:#121212;">36</div>
<div class="t" style="left:1334.30px;top:383.05px;font-size:8.8px;color:#121212;">0</div>
<div class="t" style="left:1410.85px;top:383.05px;font-size:8.8px;color:#121212;">0</div>
<div class="r" style="left:1130px;top:391px;width:513px;height:1px;background:#303030"></div>
<div class="t" style="left:1133.66px;top:392.89px;font-size:8.8px;color:#121212;">12</div>
<div class="t" style="left:1176.48px;top:392.89px;font-size:8.8px;color:#121212;">N12</div>
<div class="t" style="left:1255.51px;top:392.89px;font-size:8.8px;color:#121212;">36</div>
<div class="t" style="left:1331.86px;top:392.89px;font-size:8.8px;color:#121212;">12</div>
<div class="t" style="left:1410.85px;top:392.89px;font-size:8.8px;color:#121212;">0</div>
<div class="r" style="left:1131px;top:402px;width:511px;height:9px;background:#898d7b"></div>
<div class="r" style="left:1130px;top:401px;width:513px;height:1px;background:#303030"></div>
<div class="t" style="left:1133.66px;top:402.73px;font-size:8.8px;color:#121212;">13</div>
<div class="t" style="left:1176.48px;top:402.73px;font-size:8.8px;color:#121212;">N13</div>
<div class="t" style="left:1257.95px;top:402.73px;font-size:8.8px;color:#121212;">0</div>
<div class="t" style="left:1334.30px;top:402.73px;font-size:8.8px;color:#121212;">0</div>
<div class="t" style="left:1408.41px;top:402.73px;font-size:8.8px;color:#121212;">36</div>
<div class="r" style="left:1130px;top:411px;width:513px;height:1px;background:#303030"></div>
<div class="t" style="left:1133.66px;top:412.57px;font-size:8.8px;color:#121212;">14</div>
<div class="t" style="left:1176.48px;top:412.57px;font-size:8.8px;color:#121212;">N14</div>
<div class="t" style="left:1257.95px;top:412.57px;font-size:8.8px;color:#121212;">0</div>
<div class="t" style="left:1331.86px;top:412.57px;font-size:8.8px;color:#121212;">12</div>
<div class="t" style="left:1408.41px;top:412.57px;font-size:8.8px;color:#121212;">36</div>
<div class="r" style="left:1131px;top:422px;width:511px;height:9px;background:#898d7b"></div>
<div class="r" style="left:1130px;top:421px;width:513px;height:1px;background:#303030"></div>
<div class="t" style="left:1133.66px;top:422.41px;font-size:8.8px;color:#121212;">15</div>
<div class="t" style="left:1176.48px;top:422.41px;font-size:8.8px;color:#121212;">N15</div>
<div class="t" style="left:1257.95px;top:422.41px;font-size:8.8px;color:#121212;">0</div>
<div class="t" style="left:1334.30px;top:422.41px;font-size:8.8px;color:#121212;">0</div>
<div class="t" style="left:1408.41px;top:422.41px;font-size:8.8px;color:#121212;">18</div>
<div class="r" style="left:1130px;top:431px;width:513px;height:1px;background:#303030"></div>
<div class="t" style="left:1133.66px;top:432.25px;font-size:8.8px;color:#121212;">16</div>
<div class="t" style="left:1176.48px;top:432.25px;font-size:8.8px;color:#121212;">N16</div>
<div class="t" style="left:1257.95px;top:432.25px;font-size:8.8px;color:#121212;">0</div>
<div class="t" style="left:1331.86px;top:432.25px;font-size:8.8px;color:#121212;">12</div>
<div class="t" style="left:1408.41px;top:432.25px;font-size:8.8px;color:#121212;">18</div>
<div class="r" style="left:1131px;top:441px;width:511px;height:9px;background:#898d7b"></div>
<div class="r" style="left:1130px;top:440px;width:513px;height:1px;background:#303030"></div>
<div class="t" style="left:1133.66px;top:442.09px;font-size:8.8px;color:#121212;">17</div>
<div class="t" style="left:1176.48px;top:442.09px;font-size:8.8px;color:#121212;">N17</div>
<div class="t" style="left:1255.51px;top:442.09px;font-size:8.8px;color:#121212;">54</div>
<div class="t" style="left:1334.30px;top:442.09px;font-size:8.8px;color:#121212;">0</div>
<div class="t" style="left:1408.41px;top:442.09px;font-size:8.8px;color:#121212;">36</div>
<div class="r" style="left:1130px;top:450px;width:513px;height:1px;background:#303030"></div>
<div class="t" style="left:1133.66px;top:451.93px;font-size:8.8px;color:#121212;">18</div>
<div class="t" style="left:1176.48px;top:451.93px;font-size:8.8px;color:#121212;">N18</div>
<div class="t" style="left:1255.51px;top:451.93px;font-size:8.8px;color:#121212;">54</div>
<div class="t" style="left:1331.86px;top:451.93px;font-size:8.8px;color:#121212;">12</div>
<div class="t" style="left:1408.41px;top:451.93px;font-size:8.8px;color:#121212;">36</div>
<div class="r" style="left:1131px;top:461px;width:511px;height:9px;background:#898d7b"></div>
<div class="r" style="left:1130px;top:460px;width:513px;height:1px;background:#303030"></div>
<div class="t" style="left:1133.66px;top:461.77px;font-size:8.8px;color:#121212;">19</div>
<div class="t" style="left:1176.48px;top:461.77px;font-size:8.8px;color:#121212;">N19</div>
<div class="t" style="left:1255.51px;top:461.77px;font-size:8.8px;color:#121212;">36</div>
<div class="t" style="left:1334.30px;top:461.77px;font-size:8.8px;color:#121212;">0</div>
<div class="t" style="left:1408.41px;top:461.77px;font-size:8.8px;color:#121212;">18</div>
<div class="r" style="left:1130px;top:470px;width:513px;height:1px;background:#303030"></div>
<div class="t" style="left:1133.66px;top:471.61px;font-size:8.8px;color:#121212;">20</div>
<div class="t" style="left:1176.48px;top:471.61px;font-size:8.8px;color:#121212;">N20</div>
<div class="t" style="left:1255.51px;top:471.61px;font-size:8.8px;color:#121212;">36</div>
<div class="t" style="left:1331.86px;top:471.61px;font-size:8.8px;color:#121212;">12</div>
<div class="t" style="left:1408.41px;top:471.61px;font-size:8.8px;color:#121212;">18</div>
<div class="r" style="left:1131px;top:481px;width:511px;height:9px;background:#898d7b"></div>
<div class="r" style="left:1130px;top:480px;width:513px;height:1px;background:#303030"></div>
<div class="t" style="left:1133.66px;top:481.45px;font-size:8.8px;color:#121212;">21</div>
<div class="t" style="left:1176.48px;top:481.45px;font-size:8.8px;color:#121212;">N21</div>
<div class="t" style="left:1255.51px;top:481.45px;font-size:8.8px;color:#121212;">18</div>
<div class="t" style="left:1331.86px;top:481.45px;font-size:8.8px;color:#121212;">12</div>
<div class="t" style="left:1408.41px;top:481.45px;font-size:8.8px;color:#121212;">36</div>
<div class="r" style="left:1130px;top:490px;width:513px;height:1px;background:#303030"></div>
<div class="t" style="left:1133.66px;top:491.29px;font-size:8.8px;color:#121212;">22</div>
<div class="t" style="left:1176.48px;top:491.29px;font-size:8.8px;color:#121212;">N22</div>
<div class="t" style="left:1255.51px;top:491.29px;font-size:8.8px;color:#121212;">18</div>
<div class="t" style="left:1334.30px;top:491.29px;font-size:8.8px;color:#121212;">0</div>
<div class="t" style="left:1408.41px;top:491.29px;font-size:8.8px;color:#121212;">36</div>
<div class="r" style="left:1131px;top:500px;width:511px;height:9px;background:#898d7b"></div>
<div class="r" style="left:1130px;top:499px;width:513px;height:1px;background:#303030"></div>
<div class="t" style="left:1133.66px;top:501.13px;font-size:8.8px;color:#121212;">23</div>
<div class="t" style="left:1176.48px;top:501.13px;font-size:8.8px;color:#121212;">N23</div>
<div class="t" style="left:1255.51px;top:501.13px;font-size:8.8px;color:#121212;">54</div>
<div class="t" style="left:1331.86px;top:501.13px;font-size:8.8px;color:#121212;">12</div>
<div class="t" style="left:1408.41px;top:501.13px;font-size:8.8px;color:#121212;">30</div>
<div class="r" style="left:1130px;top:509px;width:513px;height:1px;background:#303030"></div>
<div class="t" style="left:1133.66px;top:510.97px;font-size:8.8px;color:#121212;">24</div>
<div class="t" style="left:1176.48px;top:510.97px;font-size:8.8px;color:#121212;">N24</div>
<div class="t" style="left:1255.51px;top:510.97px;font-size:8.8px;color:#121212;">36</div>
<div class="t" style="left:1331.86px;top:510.97px;font-size:8.8px;color:#121212;">12</div>
<div class="t" style="left:1408.41px;top:510.97px;font-size:8.8px;color:#121212;">30</div>
<div class="r" style="left:1131px;top:520px;width:511px;height:9px;background:#898d7b"></div>
<div class="r" style="left:1130px;top:519px;width:513px;height:1px;background:#303030"></div>
<div class="t" style="left:1133.66px;top:520.81px;font-size:8.8px;color:#121212;">25</div>
<div class="t" style="left:1176.48px;top:520.81px;font-size:8.8px;color:#121212;">N25</div>
<div class="t" style="left:1255.51px;top:520.81px;font-size:8.8px;color:#121212;">54</div>
<div class="t" style="left:1331.86px;top:520.81px;font-size:8.8px;color:#121212;">12</div>
<div class="t" style="left:1408.41px;top:520.81px;font-size:8.8px;color:#121212;">24</div>
<div class="r" style="left:1130px;top:529px;width:513px;height:1px;background:#303030"></div>
<div class="t" style="left:1133.66px;top:530.65px;font-size:8.8px;color:#121212;">26</div>
<div class="t" style="left:1176.48px;top:530.65px;font-size:8.8px;color:#121212;">N26</div>
<div class="t" style="left:1255.51px;top:530.65px;font-size:8.8px;color:#121212;">36</div>
<div class="t" style="left:1331.86px;top:530.65px;font-size:8.8px;color:#121212;">12</div>
<div class="t" style="left:1408.41px;top:530.65px;font-size:8.8px;color:#121212;">24</div>
<div class="r" style="left:1131px;top:540px;width:511px;height:9px;background:#898d7b"></div>
<div class="r" style="left:1130px;top:539px;width:513px;height:1px;background:#303030"></div>
<div class="t" style="left:1133.66px;top:540.49px;font-size:8.8px;color:#121212;">27</div>
<div class="t" style="left:1176.48px;top:540.49px;font-size:8.8px;color:#121212;">N27</div>
<div class="t" style="left:1255.51px;top:540.49px;font-size:8.8px;color:#121212;">54</div>
<div class="t" style="left:1331.86px;top:540.49px;font-size:8.8px;color:#121212;">12</div>
<div class="t" style="left:1408.41px;top:540.49px;font-size:8.8px;color:#121212;">12</div>
<div class="r" style="left:1130px;top:549px;width:513px;height:1px;background:#303030"></div>
<div class="t" style="left:1133.66px;top:550.33px;font-size:8.8px;color:#121212;">28</div>
<div class="t" style="left:1176.48px;top:550.33px;font-size:8.8px;color:#121212;">N28</div>
<div class="t" style="left:1255.51px;top:550.33px;font-size:8.8px;color:#121212;">36</div>
<div class="t" style="left:1331.86px;top:550.33px;font-size:8.8px;color:#121212;">12</div>
<div class="t" style="left:1408.41px;top:550.33px;font-size:8.8px;color:#121212;">12</div>
<div class="r" style="left:1131px;top:560px;width:511px;height:8px;background:#898d7b"></div>
<div class="r" style="left:1130px;top:559px;width:513px;height:1px;background:#303030"></div>
<div class="t" style="left:1133.66px;top:560.17px;font-size:8.8px;color:#121212;">29</div>
<div class="t" style="left:1176.48px;top:560.17px;font-size:8.8px;color:#121212;">N29</div>
<div class="t" style="left:1255.51px;top:560.17px;font-size:8.8px;color:#121212;">54</div>
<div class="t" style="left:1331.86px;top:560.17px;font-size:8.8px;color:#121212;">12</div>
<div class="t" style="left:1410.85px;top:560.17px;font-size:8.8px;color:#121212;">6</div>
<div class="r" style="left:1130px;top:568px;width:513px;height:1px;background:#303030"></div>
<div class="t" style="left:1133.66px;top:570.01px;font-size:8.8px;color:#121212;">30</div>
<div class="t" style="left:1176.48px;top:570.01px;font-size:8.8px;color:#121212;">N30</div>
<div class="t" style="left:1255.51px;top:570.01px;font-size:8.8px;color:#121212;">36</div>
<div class="t" style="left:1331.86px;top:570.01px;font-size:8.8px;color:#121212;">12</div>
<div class="t" style="left:1410.85px;top:570.01px;font-size:8.8px;color:#121212;">6</div>
<div class="r" style="left:1131px;top:579px;width:511px;height:9px;background:#898d7b"></div>
<div class="r" style="left:1130px;top:578px;width:513px;height:1px;background:#303030"></div>
<div class="t" style="left:1133.66px;top:579.85px;font-size:8.8px;color:#121212;">31</div>
<div class="t" style="left:1176.48px;top:579.85px;font-size:8.8px;color:#121212;">N31</div>
<div class="t" style="left:1255.51px;top:579.85px;font-size:8.8px;color:#121212;">30</div>
<div class="t" style="left:1331.86px;top:579.85px;font-size:8.8px;color:#121212;">12</div>
<div class="t" style="left:1408.41px;top:579.85px;font-size:8.8px;color:#121212;">36</div>
<div class="r" style="left:1130px;top:588px;width:513px;height:1px;background:#303030"></div>
<div class="t" style="left:1133.66px;top:589.69px;font-size:8.8px;color:#121212;">32</div>
<div class="t" style="left:1176.48px;top:589.69px;font-size:8.8px;color:#121212;">N32</div>
<div class="t" style="left:1255.51px;top:589.69px;font-size:8.8px;color:#121212;">24</div>
<div class="t" style="left:1331.86px;top:589.69px;font-size:8.8px;color:#121212;">12</div>
<div class="t" style="left:1408.41px;top:589.69px;font-size:8.8px;color:#121212;">36</div>
<div class="r" style="left:1131px;top:599px;width:511px;height:9px;background:#898d7b"></div>
<div class="r" style="left:1130px;top:598px;width:513px;height:1px;background:#303030"></div>
<div class="t" style="left:1133.66px;top:599.53px;font-size:8.8px;color:#121212;">33</div>
<div class="t" style="left:1176.48px;top:599.53px;font-size:8.8px;color:#121212;">N33</div>
<div class="t" style="left:1255.51px;top:599.53px;font-size:8.8px;color:#121212;">12</div>
<div class="t" style="left:1331.86px;top:599.53px;font-size:8.8px;color:#121212;">12</div>
<div class="t" style="left:1408.41px;top:599.53px;font-size:8.8px;color:#121212;">36</div>
<div class="r" style="left:1130px;top:608px;width:513px;height:1px;background:#303030"></div>
<div class="t" style="left:1133.66px;top:609.37px;font-size:8.8px;color:#121212;">34</div>
<div class="t" style="left:1176.48px;top:609.37px;font-size:8.8px;color:#121212;">N34</div>
<div class="t" style="left:1257.95px;top:609.37px;font-size:8.8px;color:#121212;">6</div>
<div class="t" style="left:1331.86px;top:609.37px;font-size:8.8px;color:#121212;">12</div>
<div class="t" style="left:1408.41px;top:609.37px;font-size:8.8px;color:#121212;">36</div>
<div class="r" style="left:1131px;top:619px;width:511px;height:8px;background:#898d7b"></div>
<div class="r" style="left:1130px;top:618px;width:513px;height:1px;background:#303030"></div>
<div class="t" style="left:1133.66px;top:619.21px;font-size:8.8px;color:#121212;">35</div>
<div class="t" style="left:1176.48px;top:619.21px;font-size:8.8px;color:#121212;">N35</div>
<div class="t" style="left:1255.51px;top:619.21px;font-size:8.8px;color:#121212;">18</div>
<div class="t" style="left:1334.30px;top:619.21px;font-size:8.8px;color:#121212;">0</div>
<div class="t" style="left:1408.41px;top:619.21px;font-size:8.8px;color:#121212;">18</div>
<div class="r" style="left:1130px;top:627px;width:513px;height:1px;background:#303030"></div>
<div class="t" style="left:1133.66px;top:629.05px;font-size:8.8px;color:#121212;">36</div>
<div class="t" style="left:1176.48px;top:629.05px;font-size:8.8px;color:#121212;">N36</div>
<div class="t" style="left:1255.51px;top:629.05px;font-size:8.8px;color:#121212;">18</div>
<div class="t" style="left:1331.86px;top:629.05px;font-size:8.8px;color:#121212;">12</div>
<div class="t" style="left:1408.41px;top:629.05px;font-size:8.8px;color:#121212;">18</div>
<div class="r" style="left:1131px;top:638px;width:511px;height:9px;background:#898d7b"></div>
<div class="r" style="left:1130px;top:637px;width:513px;height:1px;background:#303030"></div>
<div class="t" style="left:1133.66px;top:638.89px;font-size:8.8px;color:#121212;">37</div>
<div class="t" style="left:1176.48px;top:638.89px;font-size:8.8px;color:#121212;">N37</div>
<div class="t" style="left:1255.51px;top:638.89px;font-size:8.8px;color:#121212;">30</div>
<div class="t" style="left:1331.86px;top:638.89px;font-size:8.8px;color:#121212;">12</div>
<div class="t" style="left:1410.85px;top:638.89px;font-size:8.8px;color:#121212;">0</div>
<div class="r" style="left:1130px;top:647px;width:513px;height:1px;background:#303030"></div>
<div class="t" style="left:1133.66px;top:648.73px;font-size:8.8px;color:#121212;">38</div>
<div class="t" style="left:1176.48px;top:648.73px;font-size:8.8px;color:#121212;">N38</div>
<div class="t" style="left:1255.51px;top:648.73px;font-size:8.8px;color:#121212;">24</div>
<div class="t" style="left:1331.86px;top:648.73px;font-size:8.8px;color:#121212;">12</div>
<div class="t" style="left:1410.85px;top:648.73px;font-size:8.8px;color:#121212;">0</div>
<div class="r" style="left:1131px;top:658px;width:511px;height:9px;background:#898d7b"></div>
<div class="r" style="left:1130px;top:657px;width:513px;height:1px;background:#303030"></div>
<div class="t" style="left:1133.66px;top:658.57px;font-size:8.8px;color:#121212;">39</div>
<div class="t" style="left:1176.48px;top:658.57px;font-size:8.8px;color:#121212;">N39</div>
<div class="t" style="left:1255.51px;top:658.57px;font-size:8.8px;color:#121212;">12</div>
<div class="t" style="left:1331.86px;top:658.57px;font-size:8.8px;color:#121212;">12</div>
<div class="t" style="left:1410.85px;top:658.57px;font-size:8.8px;color:#121212;">0</div>
<div class="r" style="left:1130px;top:667px;width:513px;height:1px;background:#303030"></div>
<div class="t" style="left:1133.66px;top:668.41px;font-size:8.8px;color:#121212;">40</div>
<div class="t" style="left:1176.48px;top:668.41px;font-size:8.8px;color:#121212;">N40</div>
<div class="t" style="left:1257.95px;top:668.41px;font-size:8.8px;color:#121212;">6</div>
<div class="t" style="left:1331.86px;top:668.41px;font-size:8.8px;color:#121212;">12</div>
<div class="t" style="left:1410.85px;top:668.41px;font-size:8.8px;color:#121212;">0</div>
<div class="r" style="left:1131px;top:678px;width:511px;height:8px;background:#898d7b"></div>
<div class="r" style="left:1130px;top:677px;width:513px;height:1px;background:#303030"></div>
<div class="t" style="left:1133.66px;top:678.25px;font-size:8.8px;color:#121212;">41</div>
<div class="t" style="left:1176.48px;top:678.25px;font-size:8.8px;color:#121212;">N41</div>
<div class="t" style="left:1257.95px;top:678.25px;font-size:8.8px;color:#121212;">0</div>
<div class="t" style="left:1331.86px;top:678.25px;font-size:8.8px;color:#121212;">12</div>
<div class="t" style="left:1410.85px;top:678.25px;font-size:8.8px;color:#121212;">6</div>
<div class="r" style="left:1130px;top:686px;width:513px;height:1px;background:#303030"></div>
<div class="t" style="left:1133.66px;top:688.09px;font-size:8.8px;color:#121212;">42</div>
<div class="t" style="left:1176.48px;top:688.09px;font-size:8.8px;color:#121212;">N42</div>
<div class="t" style="left:1257.95px;top:688.09px;font-size:8.8px;color:#121212;">0</div>
<div class="t" style="left:1331.86px;top:688.09px;font-size:8.8px;color:#121212;">12</div>
<div class="t" style="left:1408.41px;top:688.09px;font-size:8.8px;color:#121212;">12</div>
<div class="r" style="left:1131px;top:697px;width:511px;height:9px;background:#898d7b"></div>
<div class="r" style="left:1130px;top:696px;width:513px;height:1px;background:#303030"></div>
<div class="t" style="left:1133.66px;top:697.93px;font-size:8.8px;color:#121212;">43</div>
<div class="t" style="left:1176.48px;top:697.93px;font-size:8.8px;color:#121212;">N43</div>
<div class="t" style="left:1257.95px;top:697.93px;font-size:8.8px;color:#121212;">0</div>
<div class="t" style="left:1331.86px;top:697.93px;font-size:8.8px;color:#121212;">12</div>
<div class="t" style="left:1408.41px;top:697.93px;font-size:8.8px;color:#121212;">24</div>
<div class="r" style="left:1130px;top:706px;width:513px;height:1px;background:#303030"></div>
<div class="t" style="left:1133.66px;top:707.77px;font-size:8.8px;color:#121212;">44</div>
<div class="t" style="left:1176.48px;top:707.77px;font-size:8.8px;color:#121212;">N44</div>
<div class="t" style="left:1257.95px;top:707.77px;font-size:8.8px;color:#121212;">0</div>
<div class="t" style="left:1331.86px;top:707.77px;font-size:8.8px;color:#121212;">12</div>
<div class="t" style="left:1408.41px;top:707.77px;font-size:8.8px;color:#121212;">30</div>
<div class="r" style="left:1131px;top:717px;width:511px;height:9px;background:#898d7b"></div>
<div class="r" style="left:1130px;top:716px;width:513px;height:1px;background:#303030"></div>
<div class="t" style="left:1133.66px;top:717.61px;font-size:8.8px;color:#121212;">45</div>
<div class="t" style="left:1176.48px;top:717.61px;font-size:8.8px;color:#121212;">N45</div>
<div class="t" style="left:1255.51px;top:717.61px;font-size:8.8px;color:#121212;">54</div>
<div class="t" style="left:1334.30px;top:717.61px;font-size:8.8px;color:#121212;">0</div>
<div class="t" style="left:1408.41px;top:717.61px;font-size:8.8px;color:#121212;">54</div>
<div class="r" style="left:1130px;top:726px;width:513px;height:1px;background:#303030"></div>
<div class="t" style="left:1133.66px;top:727.45px;font-size:8.8px;color:#121212;">46</div>
<div class="t" style="left:1176.48px;top:727.45px;font-size:8.8px;color:#121212;">N46</div>
<div class="t" style="left:1255.51px;top:727.45px;font-size:8.8px;color:#121212;">54</div>
<div class="t" style="left:1334.30px;top:727.45px;font-size:8.8px;color:#121212;">9</div>
<div class="t" style="left:1408.41px;top:727.45px;font-size:8.8px;color:#121212;">54</div>
<div class="r" style="left:1131px;top:737px;width:511px;height:8px;background:#898d7b"></div>
<div class="r" style="left:1130px;top:736px;width:513px;height:1px;background:#303030"></div>
<div class="t" style="left:1133.66px;top:737.29px;font-size:8.8px;color:#121212;">47</div>
<div class="t" style="left:1176.48px;top:737.29px;font-size:8.8px;color:#121212;">N47</div>
<div class="t" style="left:1255.51px;top:737.29px;font-size:8.8px;color:#121212;">36</div>
<div class="t" style="left:1334.30px;top:737.29px;font-size:8.8px;color:#121212;">9</div>
<div class="t" style="left:1408.41px;top:737.29px;font-size:8.8px;color:#121212;">54</div>
<div class="r" style="left:1130px;top:745px;width:513px;height:1px;background:#303030"></div>
<div class="t" style="left:1133.66px;top:747.13px;font-size:8.8px;color:#121212;">48</div>
<div class="t" style="left:1176.48px;top:747.13px;font-size:8.8px;color:#121212;">N48</div>
<div class="t" style="left:1255.51px;top:747.13px;font-size:8.8px;color:#121212;">54</div>
<div class="t" style="left:1334.30px;top:747.13px;font-size:8.8px;color:#121212;">9</div>
<div class="t" style="left:1408.41px;top:747.13px;font-size:8.8px;color:#121212;">36</div>
<div class="r" style="left:1146px;top:283px;width:1px;height:473px;background:#3a3a3a"></div>
<div class="r" style="left:1222px;top:283px;width:1px;height:473px;background:#3a3a3a"></div>
<div class="r" style="left:1298px;top:283px;width:1px;height:473px;background:#3a3a3a"></div>
<div class="r" style="left:1375px;top:283px;width:1px;height:473px;background:#3a3a3a"></div>
<div class="r" style="left:1451px;top:283px;width:1px;height:473px;background:#3a3a3a"></div>
<div class="r" style="left:1130px;top:796px;width:513px;height:2.2px;background:#121212"></div>
<div class="r" style="left:1130px;top:799.5px;width:513px;height:1.2px;background:#121212"></div>
<div class="t" style="left:1130.30px;top:801.55px;font-size:8.8px;color:#121212;transform:scaleX(0.9460);">RISA-3D Version 21</div>
<div class="t" style="left:1328.75px;top:801.55px;font-size:8.8px;color:#121212;transform:scaleX(0.9759);">[ RISA-3D Sample Model.r3d ]</div>
<div class="t" style="left:1616.50px;top:801.55px;font-size:8.8px;color:#121212;transform:scaleX(0.9501);">Page 1</div>
<div class="r" style="left:0px;top:852px;width:1716px;height:1px;background:#787878"></div>
<div class="r" style="left:0px;top:853px;width:1716px;height:1px;background:#a8a8a8"></div>
<div class="r" style="left:1713px;top:33px;width:1px;height:820px;background:#858585"></div>
<div class="r" style="left:1714px;top:33px;width:2px;height:820px;background:#a4a4a4"></div>
</body></html>
